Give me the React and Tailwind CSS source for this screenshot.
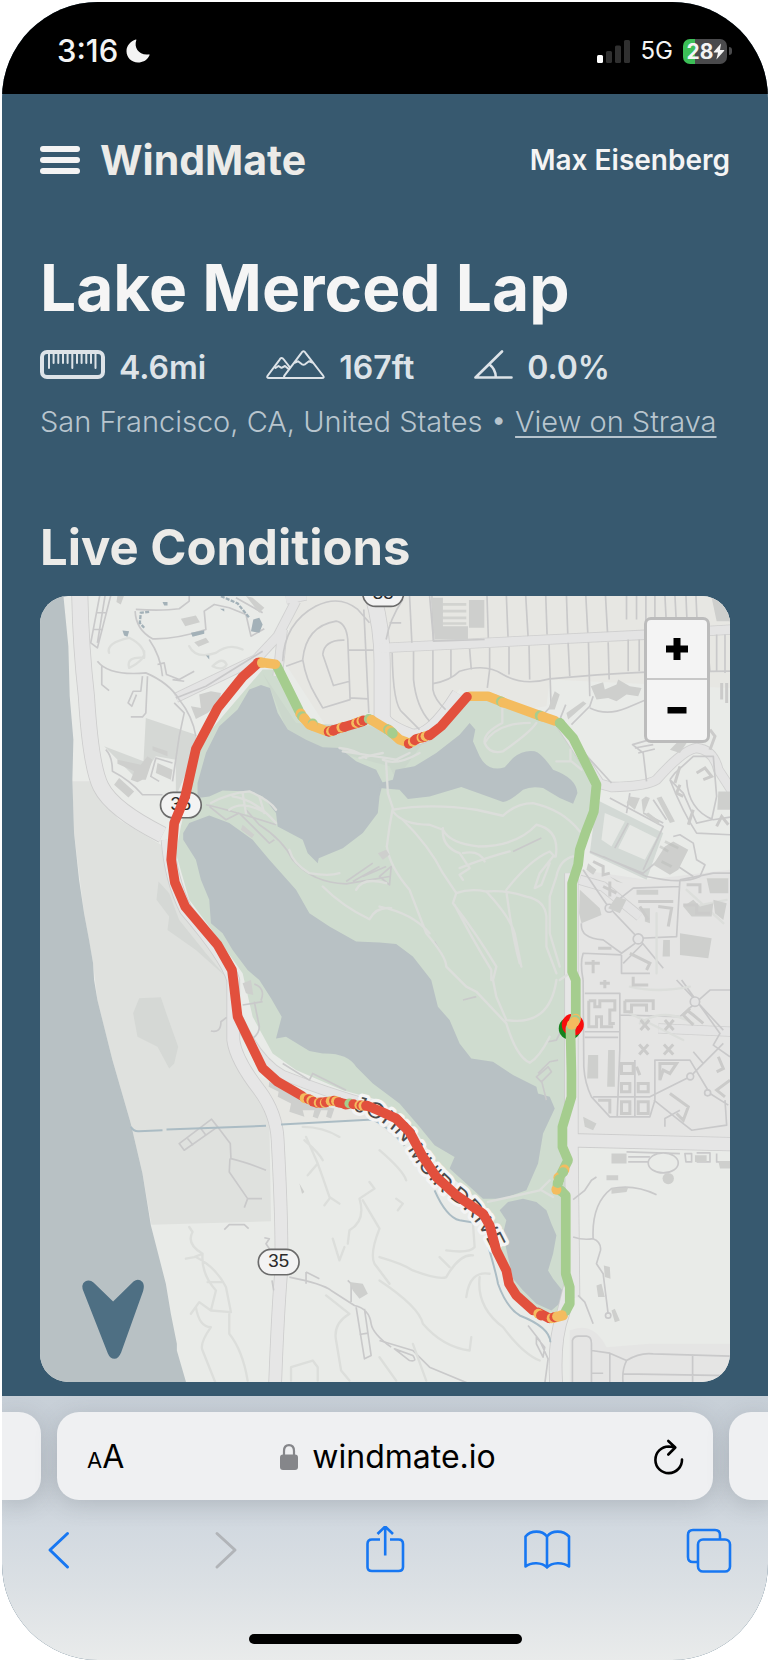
import React from 'react';

const RED = '#e2503d';
const ORANGE = '#f4bc5f';
const GREEN = '#a5cd8e';

/* Longer stretches of the course, coloured by wind exposure. */
const segments = [
  [GREEN, 'M1625 1340 L1638 1310 V1200 L1627 1175 V910 L1645 855 L1650 810 L1667 760 L1692 695 L1700 615 L1630 475 L1590 430'],
  [ORANGE, 'M1576 424 L1530 408 L1420 368 L1375 350 H1322'],
  [RED, 'M1312 352 L1235 440 L1200 467'],
  [RED, 'M1185 472 L1160 478'],
  [ORANGE, 'M1130 487 L1110 480 L1090 462'],
  [GREEN, 'M1090 462 L1072 448'],
  [ORANGE, 'M1070 448 L1050 436 L1024 420'],
  [RED, 'M1000 425 L945 442 L898 455'],
  [ORANGE, 'M890 454 L840 435 L812 402'],
  [GREEN, 'M808 392 L742 258'],
  [ORANGE, 'M738 254 L692 248'],
  [RED, 'M686 251 L640 292 L565 385 L500 508 L468 650 L435 730 L426 840 L437 908 L468 980 L565 1095 L608 1170 L612 1200 L625 1310 L700 1465 L745 1505 L818 1547'],
  [RED, 'M862 1568 L890 1566'],
  [RED, 'M925 1566 L955 1573'],
  [RED, 'M1012 1576 L1050 1592 L1100 1615 L1140 1655 L1180 1730 L1220 1790 L1280 1845 L1360 1900 L1380 1935 L1400 2010 L1430 2070 L1438 2110 L1460 2145 L1510 2190'],
  [RED, 'M1525 2196 L1558 2213'],
  [ORANGE, 'M1574 2212 L1600 2205'],
  [GREEN, 'M1608 2192 L1620 2170 V2120 L1608 2080 V1845 L1595 1832'],
  [GREEN, 'M1583 1815 L1590 1790 L1615 1740 L1598 1700 V1640 L1625 1550 V1480 L1622 1345'],
];

/* Short samples where the exposure flips quickly: [x, y, colour]. */
const samples = [
  [694, 249, ORANGE], [686, 250, RED], [698, 250, ORANGE],
  [814, 402, ORANGE], [818, 410, GREEN], [824, 416, ORANGE], [850, 432, GREEN], [850, 438, ORANGE],
  [898, 456, RED], [905, 455, ORANGE], [912, 453, RED], [936, 444, ORANGE], [944, 442, RED],
  [980, 430, ORANGE], [988, 428, RED], [996, 424, ORANGE], [1002, 423, RED], [1018, 418, GREEN], [1026, 421, ORANGE],
  [1076, 450, GREEN], [1081, 453, ORANGE], [1088, 459, GREEN],
  [1138, 492, RED], [1150, 486, ORANGE], [1156, 482, RED], [1176, 474, ORANGE], [1181, 472, RED], [1188, 470, ORANGE], [1198, 467, RED],
  [1414, 366, GREEN], [1420, 369, ORANGE], [1530, 408, GREEN], [1538, 411, ORANGE], [1590, 430, GREEN],
  [826, 1554, ORANGE], [838, 1557, RED], [846, 1561, ORANGE], [852, 1565, RED], [868, 1568, ORANGE], [874, 1568, RED],
  [886, 1568, ORANGE], [890, 1566, RED], [904, 1563, ORANGE], [914, 1562, RED], [920, 1563, ORANGE], [928, 1566, RED], [948, 1573, RED],
  [960, 1570, GREEN], [972, 1572, RED], [990, 1575, ORANGE], [996, 1576, RED], [1002, 1577, ORANGE], [1010, 1577, RED],
  [1526, 2200, ORANGE], [1534, 2205, RED], [1560, 2213, RED], [1566, 2213, ORANGE], [1574, 2210, RED], [1582, 2208, ORANGE], [1596, 2204, ORANGE],
  [1594, 1833, GREEN], [1580, 1828, ORANGE], [1584, 1808, GREEN], [1586, 1792, ORANGE], [1588, 1798, GREEN], [1604, 1768, ORANGE], [1600, 1776, GREEN],
  [1638, 1316, ORANGE], [1637, 1320, GREEN], [1634, 1326, ORANGE], [1626, 1334, ORANGE],
];

function RouteShield({ x, y, label }) {
  return (
    <g>
      <rect x={x - 61} y={y - 38} width="122" height="76" rx="38" fill="#f3f3f3" stroke="#6b6b6b" strokeWidth="5" />
      <text x={x} y={y + 16} textAnchor="middle" fontSize="56" fill="#2b2b2b" className="font-['Liberation_Sans']">{label}</text>
    </g>
  );
}

function RouteMap() {
  return (
    <svg viewBox="33 48 2067 2358" preserveAspectRatio="xMidYMid slice" className="block h-full w-full" role="img" aria-label="Map of the Lake Merced Lap course">
      <rect x="33" y="48" width="2067" height="2358" fill="#e9ebe8" />
      {/* built-up ground */}
      <g fill="#e7e7e3">
        <path d="M800 48 H2100 V325 L1560 300 L1550 380 L1480 390 L1290 330 L1190 450 L1050 430 L890 440 L760 240Z" />
        <path d="M690 1490 L730 1630 L1030 1620 L1130 1700 L1100 1600 L900 1560Z" />
      </g>
      <path d="M1700 1085 L1650 1040 V870 L1850 900 L2100 870 V1690 H1650 V1100Z" fill="#e4e4e3" />
      <path d="M1650 860 L1700 900 H2100 V1690 L1645 1680Z" fill="#e5e5e4" />
      <path d="M1620 2250 Q1690 2220 1730 2300 L1860 2290 H2100 V2410 H1620Z" fill="#e5e5e4" />
      <path d="M1700 660 L1900 760 L1850 900 L1680 820Z" fill="#d3d9d5" />
      <path d="M130 605 H190 L215 660 L270 720 L395 795 L410 880 L600 1180 L595 1380 L640 1480 L720 1620 L725 1923 L367 1933 L340 1780 L305 1630 L250 1440 L205 1260 L192 1150 L165 1000 L135 760Z" fill="#dfe1de" />
      <g fill="#d5d8d5">
        <path d="M350 415 L500 465 L505 500 L440 650 L440 540 L380 530 L330 605 L225 500 L343 545Z" />
        <path d="M388 905 L420 940 L450 1020 L530 1120 L590 1190 L500 1110 L415 1050 L420 1010 L382 960Z" />
        <path d="M330 1255 L395 1252 L415 1310 L447 1400 L435 1450 L420 1465 L385 1400 L325 1370 L312 1300Z" />
      </g>
      <path d="M33 48 H103 L118 200 L122 350 L133 480 L130 600 L135 760 L150 900 L165 1000 L180 1080 L192 1150 L195 1200 L205 1260 L250 1440 L305 1630 L340 1780 L365 1935 L410 2110 L425 2200 L443 2290 V2310 L472 2410 H33Z" fill="#b8c1c4" />
      {/* park */}
      <path d="M700 270 H740 L800 400 L900 470 L1020 430 L1080 450 L1140 490 L1200 470 L1300 345 H1400 L1590 430 L1700 620 L1680 760 L1640 860 L1630 1200 L1640 1560 L1600 1700 L1620 1830 L1610 2150 L1590 2200 L1500 2190 L1430 2080 L1395 1960 L1370 1880 L1230 1760 L1150 1640 L1050 1560 L940 1530 L800 1470 L730 1420 L670 1310 L640 1180 L540 1040 L480 960 L440 820 L455 740 L490 590 L520 480Z" fill="#cfdccf" />
      <path d="M700 280 L800 430 L1020 440 L1180 490 L1100 600 L1080 560 L930 520 L780 470 L720 320Z" fill="#cbd7cc" />
      {/* lakes */}
      <g fill="#b8c1c4">
        <path d="M695 316 L722 325 L745 400 L775 450 L830 480 L880 503 L930 505 L980 545 L1040 570 L1060 610 L1050 650 L1045 700 L1000 760 L940 805 L868 835 L865 850 L835 820 L820 780 L745 740 L740 700 L700 650 L660 635 L580 632 L540 650 L505 655 V610 L530 520 L570 440 L625 390 L660 330Z" />
        <path d="M1098 570 L1155 560 L1220 520 L1290 465 L1320 430 L1337 450 L1330 485 L1350 530 Q1375 578 1425 563 L1450 535 Q1480 510 1515 515 Q1535 520 1570 570 Q1640 595 1643 640 L1630 672 L1590 655 L1540 625 Q1505 618 1480 630 Q1440 665 1420 667 L1360 645 L1295 622 L1200 650 L1135 658 L1110 630 L1050 625 L1052 610 L1090 600Z" />
        <path d="M462 760 L480 730 L540 707 L600 730 L670 780 L720 840 L800 930 L840 1000 L900 1040 L980 1085 L1050 1088 L1100 1092 L1150 1130 L1205 1200 L1225 1280 L1260 1320 L1290 1390 L1325 1435 L1390 1445 L1450 1485 L1520 1520 L1525 1540 L1560 1550 L1575 1585 L1540 1660 L1525 1750 L1490 1830 L1420 1855 H1360 L1260 1765 L1275 1730 L1215 1695 L1170 1640 L1110 1570 L1030 1510 L980 1460 Q955 1418 880 1420 L840 1413 L770 1370 L740 1375 L757 1310 L725 1255 L690 1200 L655 1170 L610 1110 L580 1060 L545 1030 L540 960 L515 900 L500 840 L462 780Z" />
        <path d="M1410 1890 L1435 1865 L1480 1855 L1520 1865 L1550 1890 L1565 1930 L1580 1965 L1570 2020 L1555 2070 L1570 2095 L1598 2130 L1595 2165 L1565 2190 L1520 2170 L1480 2130 L1450 2095 L1435 2030 L1420 1960 L1430 1920Z" />
      </g>

      {/* arterial roads: casing first, then surface */}
      {[['#cdcdcd', 5], ['#e6e6e6', 0]].map(([tone, extra]) => (
        <g key={tone} fill="none" stroke={tone} strokeLinejoin="round">
          <path strokeWidth={46 + extra} d="M152 40 Q155 200 172 350 Q185 560 215 620 Q250 690 400 765 M1028 40 Q1058 140 1058 250 V410 Q1060 440 1140 470 Q1200 490 1290 345" />
          <path strokeWidth={36 + extra} d="M415 780 Q425 900 470 990 Q590 1130 612 1200 V1380 Q620 1440 690 1530 Q742 1600 745 1680 Q760 1960 755 2080 Q745 2200 737 2420 M1580 2420 Q1570 2280 1600 2200 L1630 2080" />
          <path strokeWidth={26 + extra} d="M625 1310 Q680 1440 760 1485 Q900 1540 1010 1570 M800 64 L745 170 L680 240 L440 355 M770 60 L830 48 M760 150 L745 290 M1050 206 L1860 165 L2110 150 M1590 430 L1710 612 L1745 622 Q1850 620 1880 600 Q1960 510 2000 505 Q2050 510 2065 570 L2110 640 M1830 1010 L1720 920 L1650 900 M1885 1345 L2110 1355" strokeOpacity="0.9" />
          <path strokeWidth={38 + extra} d="M1620 1680 L2110 1692 M1625 880 V1700 L1630 2150" />
        </g>
      ))}

      {/* local streets */}
      <g fill="none" stroke="#c9c9ca" strokeWidth="5" strokeLinejoin="round">
        <path d="M212 48 L185 190 L205 205 L245 48 M228 48 L205 190 M200 100 H232 M195 150 H222 M205 245 Q240 290 350 280 Q420 310 450 360 Q490 410 500 470 M218 260 V315 L240 333 M355 290 L350 400 L340 412 H305 M340 290 L335 335 L312 335 L297 370 L308 380 L322 345" />
        <path d="M440 355 L530 320 L700 215 M360 180 Q395 230 400 290 M385 255 L405 250 L412 285 L450 300 L495 275 M430 300 L465 305 M435 370 L465 400 L450 470 L430 605 M318 95 Q320 150 370 178 Q440 180 530 150 L525 95 L555 75 L600 85 L650 105 L665 170 L705 148 M320 90 Q400 95 450 88 L480 65 V48" />
        <path d="M230 510 Q250 530 250 575 Q300 600 340 645 H400 M430 550 L380 535 L365 590 L390 605 M620 55 L700 100" />
        <path d="M760 245 Q765 130 860 80 Q930 45 985 90 L1020 130 M820 240 Q830 140 920 125 Q950 130 955 180 L962 360 L880 385 L860 350 Q830 300 820 240 M880 225 Q885 180 945 182 M880 225 L912 318 L958 306 M770 260 L820 242 M958 212 H1032 M962 355 L1015 358 M1003 90 L1018 400" />
        <path d="M1140 48 L1147 190 M1207 48 L1212 185 M1372 48 L1376 175 M1430 48 L1435 172 M1488 48 L1495 170 M1548 48 L1552 165 M1610 48 L1614 163 M1668 48 L1674 160 M1727 48 L1733 158 M1790 48 V120 M1820 48 V120 M1848 48 V150 M1875 48 V150 M1905 48 L1910 145 M1935 48 L1940 145 M1968 48 L1972 145 M1998 48 L2002 140" />
        <path d="M1088 220 Q1090 380 1120 400 L1170 450 M1152 215 V300 Q1160 380 1200 425 M1210 212 V330 Q1215 360 1248 390 M1264 210 V292 M1320 208 L1325 270 M1380 205 V270 L1373 325 M1438 202 V285 M1498 198 L1500 300 M1558 195 L1564 380 L1540 405 M1615 190 L1620 290 M1676 188 L1680 350 M1735 188 L1738 300 M1795 180 V275 M1828 180 V275 M2060 165 V275 M2030 165 L2040 275 M2085 165 V280" />
        <path d="M1210 312 Q1260 305 1290 275 Q1370 250 1420 285 Q1480 320 1560 298 Q1700 285 1850 278 L2100 275 M1200 48 L1212 185 L1365 180 M1080 130 H1115 M1070 180 Q1080 120 1120 60" />
        <path d="M1590 440 L1745 610 M1625 435 L1680 380 L1690 350 M1590 420 L1608 375 M1680 385 Q1730 410 1790 385 L1850 360 M1850 605 L1840 520 L1808 495 L1860 480 M1815 505 L1870 495 M1825 520 L1875 508 M1920 600 L1935 580 L1990 530 L2050 530 L2060 650 L2045 720 L2000 730 L1960 640 L1920 600 M1920 600 Q1960 700 2000 760 L2100 765 M1970 600 Q1975 690 2050 720 L2100 712" />
        <path d="M1680 815 L1840 880 L1900 830 L1990 890 M1755 805 L1795 730 M1720 830 L1850 890 Q1960 915 2010 890 L2025 855 L2000 840 L1990 790 L1950 765 L1930 770 M1840 700 L1900 730 M1740 655 L1900 740 L1840 870 M1870 660 L1910 720 M1800 640 L1790 700" />
        <path d="M1660 870 Q1700 930 1735 980 L1830 1080 L1900 1165 M1740 980 L1810 925 L1950 920 M1830 1080 L1775 1120 L1720 1080 Q1650 1075 1655 1030 M1830 1075 L1940 1070 L1950 900 M1775 1125 L1660 1120 Q1650 1150 1660 1200 M1775 1125 V1180 L1860 1180 M1840 1090 L1780 1150 M1950 900 L2050 880 H2100" />
        <path d="M1660 1200 L1662 1460 Q1665 1510 1685 1550 L1740 1610 H1860 L1875 1560 V1440 L1980 1440 L2040 1540 L2095 1575 M1665 1240 H1770 V1410 L1762 1610 M1770 1305 L1950 1310 L2040 1230 H2100 M1665 1355 H1770 M1665 1372 H1765 M1690 1550 H1860 L1980 1490 L2080 1390 M1872 1560 L1960 1630 L1985 1650 L2090 1635 L2085 1560 M1815 1440 V1610 M1940 1200 L2080 1350 M1955 1200 L2070 1360 L2050 1395 L2100 1430 M1905 1640 V1615 L1950 1590 M1990 1415 L2020 1450" />
        <path d="M1630 1858 L1665 1830 L1685 1800 L1700 1790 M1630 1970 Q1660 1980 1690 1975 Q1685 1870 1745 1825 Q1810 1810 1880 1843 M1690 1975 Q1715 1985 1712 2010 L1700 2050 L1720 2080 L1735 2200 M1645 2145 L1665 2165 L1690 2230 M1790 1715 L1950 1720 M1795 1730 H1860 M1795 1745 H1860 M1965 1720 H1985 V1745 H1968Z M2000 1718 H2040 V1745 H2000 M2060 1720 V1745 H2100" />
        <path d="M1628 2410 V2280 Q1632 2265 1650 2267 H1670 Q1685 2268 1685 2290 V2410 M1685 2310 L1740 2318 L1790 2340 Q1830 2315 1870 2320 L2100 2327 M1790 2340 Q1775 2370 1780 2410 M1740 2320 V2410 M1780 2380 L2100 2385 M1988 2325 V2405 M1685 2378 H1720 M1495 2235 L1530 2280 L1555 2335 L1545 2410 M1520 2270 L1545 2300 L1540 2330 L1520 2290Z M1050 2280 L1150 2310 L1200 2360 L1320 2410 M1095 2305 L1150 2325 Q1165 2345 1140 2340Z" />
        <path d="M450 1690 L547 1617 L565 1640 L465 1710Z M515 1645 L530 1665 M475 1675 L492 1695 M565 1640 L603 1690 L605 1735 Q650 1745 710 1770 M602 1735 L600 1775 L655 1855 H698 M655 1855 L645 1882 M545 1353 Q575 1360 575 1325 L592 1312 M585 1948 L600 1933 H645 L658 1945 M705 1972 L720 1975 L710 1990 L722 2008 M728 2100 L733 2130" />
        <path d="M780 2090 Q880 2110 905 2130 L975 2175 Q1020 2185 1025 2230 Q1030 2260 1085 2300 M830 2075 L870 2095 M830 2075 V2110 M980 2180 L1005 2335 L1025 2325 L1005 2185 M990 2262 L1015 2258 M965 2165 V2110 L955 2100 M760 1450 L840 1500 L850 1480 L950 1530 M640 1275 L700 1265 M675 1265 L690 1340 Q690 1360 670 1375 M675 1212 Q710 1225 695 1262" />
        <path d="M1535 1500 L1550 1560 M1525 1480 L1560 1445 L1585 1440 M1520 1490 L1555 1460 L1565 1475 L1535 1505Z M1555 1385 L1580 1380 L1590 1360 M530 675 Q600 690 740 735 M540 680 L590 720 L630 700 M630 700 L720 790 L735 780 M650 690 L690 735 Q760 780 790 840 Q850 910 950 912 L1080 890 M950 905 L1030 850 M970 905 L1050 860 M1000 890 L1070 860 M1050 890 L1085 860 L1080 915Z M1300 1260 L1340 1250 M1215 1085 L1235 1120 M1450 815 L1535 775" />
      </g>
      <circle cx="1738" cy="985" r="12" fill="#e4e4e4" stroke="#c9c9ca" strokeWidth="5" />
      <circle cx="1825" cy="1077" r="15" fill="#e4e4e4" stroke="#c9c9ca" strokeWidth="5" />
      <circle cx="1995" cy="1265" r="14" fill="#e4e4e4" stroke="#c9c9ca" strokeWidth="5" />
      <circle cx="1981" cy="1489" r="10" fill="#e4e4e4" stroke="#c9c9ca" strokeWidth="5" />
      <circle cx="2033" cy="1538" r="9" fill="#e4e4e4" stroke="#c9c9ca" strokeWidth="5" />
      <circle cx="1735" cy="2205" r="8" fill="none" stroke="#c9c9ca" strokeWidth="5" />
      <ellipse cx="1900" cy="1748" rx="45" ry="30" fill="#e9ebe8" stroke="#c9c9ca" strokeWidth="5" />

      {/* footpaths */}
      <g fill="none" stroke="#dcdedb" strokeWidth="7" strokeLinejoin="round" strokeLinecap="round">
        <path d="M1070 550 L1075 640 L1090 685 L1080 740 L1072 800 M1090 690 Q1200 670 1340 690 L1420 708 Q1460 670 1510 670 Q1600 690 1650 755 M1090 695 Q1120 735 1200 735 L1240 750 Q1260 790 1345 800 Q1460 800 1520 735 Q1590 750 1578 830 M1240 745 Q1235 800 1290 820 L1320 865 L1290 885 L1300 900 M1290 865 Q1380 830 1440 815 M1300 820 Q1350 810 1365 845" />
        <path d="M1120 720 Q1200 800 1240 880 L1280 940 L1270 970 Q1340 1060 1400 1160 L1390 1200 M1280 940 Q1320 925 1370 935 Q1430 930 1490 950 Q1545 960 1550 1010 V1100 L1580 1180 M1370 935 Q1440 1010 1455 1060 L1475 1160 M1430 930 Q1500 840 1560 815 L1575 830 M1570 830 L1530 880 L1515 925 L1535 915 L1560 850 M1630 830 Q1590 840 1580 890 L1560 950 V1060 L1590 1160 M1430 935 Q1450 1080 1470 1150 M1275 975 Q1330 1080 1385 1170 V1200" />
        <path d="M1072 800 Q1080 860 1140 930 L1190 1060 Q1250 1130 1250 1160 L1310 1220 L1340 1235 L1430 1330 Q1460 1430 1500 1448 Q1530 1430 1560 1370 M1390 1200 L1400 1250 L1430 1320 Q1560 1340 1580 1200 M1050 980 Q1150 1000 1200 1060 M1590 1200 L1620 1180 M780 810 Q790 850 840 880 Q900 890 930 880 M880 920 Q940 980 1020 1018 Q1040 980 1085 985 M980 930 Q1000 890 1070 910" />
        <path d="M1418 370 V430 Q1360 460 1365 490 Q1380 525 1420 515 Q1500 460 1520 430 M1365 490 Q1400 430 1500 430 M1580 545 H1625 L1655 570 M1622 545 V510 M930 505 Q980 510 1010 535 M940 515 Q1040 530 1100 540 L1140 520 M1060 540 Q1100 560 1170 520 M990 535 L1060 520 M545 670 Q600 640 660 635 Q720 660 740 690 M610 650 Q680 660 740 730 M600 690 Q640 660 710 700 M640 640 L650 700 M690 650 L705 700 M1375 1865 L1530 1830 L1560 1800 M1535 1830 L1570 1850" />
        <path d="M480 1940 L490 1955 Q470 1990 520 2020 L495 2030 L470 2035 M500 2030 Q560 2060 590 2120 L605 2195 M520 2020 Q515 2080 560 2130 L545 2190 L605 2195 M545 2190 L510 2165 L485 2200 M500 2180 Q510 2240 545 2240 Q510 2290 520 2310 L560 2410 M600 2200 L600 2260 Q640 2310 655 2400 M535 2105 H578" />
        <path d="M820 1640 Q880 1640 930 1670 M825 1680 Q870 1720 880 1740 M830 1670 L865 1750 L835 1785 M865 1750 Q880 1790 900 1850 L930 1870 M900 1855 L885 1875 M1020 1805 L1035 1825 L990 1855 Q1010 1920 960 1950 L955 1990 M1000 1860 L1050 1945 Q1020 2020 1035 2050 L1080 2110 M910 1975 L930 2040 L945 2000 M890 2145 L960 2200 Q910 2230 920 2280 L935 2370 L960 2400 M785 2400 V2360 L850 2340 L865 2360 V2400" />
        <path d="M1050 2030 Q1120 2050 1150 2070 Q1230 2100 1250 2090 Q1290 2020 1330 2025 M1250 2010 Q1320 2020 1335 2000 L1330 1930 M1230 2030 L1260 2060 M1050 2100 Q1170 2180 1180 2230 Q1240 2300 1320 2310 L1325 2270 M1380 2080 Q1320 2070 1310 2150 M1350 2090 Q1340 2180 1420 2240 Q1480 2320 1530 2340 M1050 1710 Q1120 1770 1130 1800 M1100 1855 L1120 1870 L1105 1890 M1050 2330 L1100 2400 M1150 2290 L1190 2400" />
        <path d="M240 220 Q230 190 300 175 Q350 200 345 235 Q290 230 300 265 Q350 240 345 215 M480 200 Q500 240 560 220 Q600 190 640 210 M550 260 Q580 230 592 255 Q580 275 550 260" />
        <path d="M1800 1220 Q1880 1240 1980 1220 M1800 1300 L1960 1380 M1830 1330 Q1900 1280 1990 1330 M1990 980 L2090 960 M1970 930 L2080 1030 M1880 1000 V1180" />
      </g>

      {/* buildings */}
      <g fill="#cecfcd">
        <path d="M455 118 L500 108 L512 128 L468 140Z M495 188 L530 175 L540 188 L508 202Z M650 50 L670 55 L705 85 L690 100Z M265 48 H285 L275 75 L262 68Z" />
        <path d="M485 380 L515 385 L510 345 L545 335 L575 340 L570 370 L535 400 L500 418Z M370 500 L415 515 V530 L370 512Z M265 540 L335 555 L355 530 L370 540 L350 600 H340 L325 608 L305 600 L315 575 L265 552Z M385 550 L430 570 L425 600 L380 580Z M270 595 L315 635 L298 653 L255 615Z" />
        <path d="M1205 55 H1240 V140 H1315 V180 H1215Z M1318 62 H1364 V145 H1318Z" />
        <path d="M2045 55 H2100 V125 H2060Z M1565 360 L1575 335 L1590 345 L1575 390 L1555 390Z M1610 400 L1660 365 L1670 372 L1615 420Z M1683 320 L1720 308 L1725 330 L1760 315 L1765 300 L1800 320 L1835 325 L1825 350 L1790 345 L1760 365 L1735 355 L1700 360Z" />
        <path d="M1790 670 L1800 650 L1830 655 L1815 690Z M1835 660 L1848 650 L1860 655 L1840 705Z M1880 655 L1895 650 L1935 725 L1920 730Z M1845 705 L1855 698 L1890 725 L1885 735Z" />
        <path d="M1905 800 L1930 785 L1975 810 L1945 870 L1920 885 L1870 855Z M1920 510 L1945 485 L1970 490 L1950 520Z M2065 635 H2100 V690 H2062Z" />
        <path d="M1650 930 L1710 985 L1715 1005 L1655 1030 L1648 1000Z M2030 895 H2095 V940 H2040Z M1960 980 L1990 960 L2010 980 L2050 970 L2045 1010 L1985 1010Z M1950 1060 L2045 1075 L2035 1135 L1950 1125Z M1900 1080 H1920 V1130 H1898Z M1820 930 H1885 V945 H1820Z M1675 850 L1700 870 L1690 885 L1670 870Z M1740 890 L1780 910 L1760 905Z M1735 985 L1760 950 L1790 960 L1770 1000Z M1825 985 L1860 985 V1030 L1845 1025 V1000Z M2050 960 L2090 970 L2080 1020 L2055 1000Z" />
        <path d="M1675 1425 H1705 V1495 H1672Z M1735 1410 H1755 V1520 H1732Z M1660 1610 L1700 1630 L1690 1650 L1665 1640Z M1745 1720 H1790 V1750 H1745Z M1730 1785 H1765 V1800 H1730Z M1745 1825 L1795 1822 L1790 1835 L1745 1840Z M1722 2055 L1740 2060 L1742 2095 L1725 2090Z M1700 2115 L1715 2110 L1725 2150 L1705 2150Z M1745 2190 L1755 2185 L1770 2220 L1755 2225Z M1995 1725 H2030 V1745 H1995Z M2065 1742 H2100 V1765 H2070Z" />
        <circle cx="1915" cy="1795" r="17" />
        <path d="M640 1210 L665 1200 L672 1245 L650 1240Z M720 1505 L790 1545 L840 1570 L915 1585 L905 1615 L890 1610 L895 1590 L875 1590 L865 1615 L850 1610 L855 1590 L820 1590 L825 1610 L780 1595 L785 1570 L745 1550 L748 1535 L718 1520Z M960 2105 L1000 2110 L1015 2140 L990 2155 L970 2130Z M640 735 L675 765 L668 775 L635 750Z M1045 820 L1070 810 L1080 825 L1060 840Z M810 1810 L825 1835 L818 1840Z" />
      </g>
      {/* small campus blocks */}
      <g fill="none" stroke="#cbcbca" strokeWidth="9">
        <path d="M1677 1262 H1695 V1280 H1710 V1262 H1755 V1290 H1740 V1330 H1755 M1677 1262 V1340 H1700 V1310 H1715 V1340 H1750 M1785 1262 H1870 V1290 M1785 1262 V1295 H1805 V1275 H1850 V1295 M1725 1200 V1225 M1710 1210 H1740 M1810 1190 V1215 H1855" />
        <path d="M1775 1450 H1810 V1480 H1775Z M1820 1460 L1830 1485 M1890 1450 H1940 L1920 1480 L1900 1470 L1890 1500Z M1775 1510 H1800 V1535 H1775Z M1825 1510 H1855 V1535 H1825Z M1705 1560 H1740 V1600 M1775 1565 H1800 V1600 H1775Z M1825 1565 H1855 V1600 H1825Z M1920 1540 L1975 1580 L1960 1620 L1940 1600 M2065 1430 L2080 1465 L2060 1475 M2100 1500 L2060 1530 L2085 1550" />
        <path d="M1690 845 L1720 860 V885 L1740 880 M1720 920 L1760 940 M1740 905 V950 M1825 965 H1930 M1830 980 L1855 1020 M1885 980 L1925 985 L1915 1040 M1970 915 H2010 V940 M1960 975 H2000 V1000 H2040 M1690 1140 V1180 M1665 1150 H1710 M1705 1105 H1745 M1800 1120 L1860 1150 L1850 1170 M2000 580 L2025 565 L2045 590 L2020 600 M1960 650 L1940 640 L1950 615 M1975 735 L1990 690 M2060 740 L2075 710 L2095 735 M1935 610 L1950 560 M2040 450 L2055 470 L2040 510 M2075 310 V360 M2090 310 V370" />
        <path d="M1832 1320 L1858 1350 M1858 1320 L1832 1350 M1905 1320 L1931 1350 M1931 1320 L1905 1350 M1828 1393 L1855 1423 M1855 1393 L1828 1423 M1902 1393 L1930 1423 M1930 1393 L1902 1423" />
        <path d="M1970 1290 L1990 1305 L2020 1330 M1980 1285 L1960 1305 L1990 1335" />
      </g>
      <path d="M1725 700 L1785 725 L1745 800 L1715 780Z M1800 735 L1880 775 L1845 840 L1765 805Z" fill="#e6e8e5" />
      <g stroke="#b9bab8" strokeWidth="8">
        <path d="M1890 800 L1915 815 M1905 785 L1945 805 M1895 845 L1925 860 M1240 75 H1310 M1240 95 H1310 M1240 115 H1310 M1240 132 H1310" strokeOpacity="0.45" />
      </g>

      {/* streams and ponds */}
      <g fill="none" stroke="#abbcc4" strokeWidth="6">
        <path d="M305 1640 Q315 1655 330 1653 L400 1650 M412 1648 L710 1637 M755 1633 L1030 1618 Q1080 1640 1125 1697 M1215 1830 Q1250 1910 1290 1920 L1335 1927 M1372 1985 Q1400 2080 1405 2110 Q1430 2180 1470 2205 Q1560 2240 1562 2285" />
      </g>
      <g fill="#a3b1b8">
        <path d="M672 120 L690 115 L700 135 L690 160 L665 155Z M485 160 L525 152 V163 L490 172Z M400 68 H415 V78 H405Z M280 153 L300 155 L295 172 L285 168Z M530 228 H540 V240Z M572 88 H585 V96Z" />
      </g>
      <path d="M575 50 L625 72 L660 115 M360 97 L335 100 L332 130 L345 145" fill="none" stroke="#a3b1b8" strokeWidth="7" strokeDasharray="12 4" />

      {/* labels */}
      <path id="muir-drive" d="M972 1592 Q1060 1610 1125 1690 Q1175 1785 1255 1850 Q1350 1910 1400 2040" fill="none" />
      <text fontSize="68" fill="#4a4a4a" stroke="#f4f4f4" strokeWidth="20" strokeLinejoin="round" paintOrder="stroke" className="font-['Liberation_Sans']">
        <textPath href="#muir-drive">JOHN MUIR DRIVE</textPath>
      </text>
      <RouteShield x={1061} y={43} label="35" />
      <RouteShield x={455} y={676} label="35" />
      <RouteShield x={748} y={2045} label="35" />

      {/* start and finish, then the course */}
      <circle cx="1620" cy="1345" r="33" fill="#16821d" />
      <circle cx="1629" cy="1334" r="33" fill="#f90d0d" />
      <g fill="none" strokeWidth="29" strokeLinecap="round" strokeLinejoin="round">
        {segments.map(([tone, d]) => <path key={d} d={d} stroke={tone} />)}
      </g>
      {samples.map(([x, y, tone], i) => <circle key={i} cx={x} cy={y} r="15" fill={tone} />)}

      {/* wind direction */}
      <path d="M252 2163 L313 2103 Q328 2092 340 2105 Q347 2115 342 2132 L276 2316 Q268 2335 256 2335 Q243 2335 236 2318 L164 2135 Q154 2112 168 2103 Q182 2096 194 2107Z" fill="#4e6f83" />
    </svg>
  );
}

function StatusBar() {
  return (
    <div className="flex h-[92px] items-center justify-between bg-black pt-1.5 pr-9 pl-[55px] text-[#f4f4f4]">
      <div className="flex items-center gap-2">
        <span className="text-[31px] leading-9 font-medium">3:16</span>
        <svg viewBox="0 0 24 24" className="size-6" fill="currentColor" aria-label="Do not disturb">
          <path d="M9.8 .6 Q10.5 0 10.3 1.2 C7.6 8.6 13 16.6 22.6 15.4 Q24 15.2 23.4 16.4 C20.9 21.4 16.6 23.4 12 23.4 C5.4 23.4 .5 18.4 .5 12.2 C.5 6.800 4.500 2.200 9.800 .6Z" />
        </svg>
      </div>
      <div className="flex items-center">
        <svg viewBox="0 0 34 23" className="h-[23px] w-[34px]" aria-label="Signal">
          <rect x="0" y="15" width="6" height="8" rx="1.500" fill="#fff" />
          <rect x="9" y="11" width="6" height="12" rx="1.500" fill="#303030" />
          <rect x="18" y="5.500" width="6" height="17.500" rx="1.500" fill="#303030" />
          <rect x="27" y="0" width="6" height="23" rx="1.500" fill="#303030" />
        </svg>
        <span className="ml-2.5 text-2xl">5G</span>
        <div className="ml-2.5 flex h-[25px] w-11 items-center justify-center rounded-[7px] bg-[linear-gradient(to_right,#3cbf57_28%,#4a4a4c_28%)] pl-0.5">
          <span className="text-[21px] leading-none font-bold">28</span>
          <svg viewBox="0 0 12 17" className="h-[17px] w-3" fill="currentColor" aria-hidden="true">
            <path d="M8 .4 L.8 8.800 Q.4 9.600 1.200 9.600 H5 L3.400 16.600 L11.200 7.800 Q11.600 7 10.800 7 H7Z" />
          </svg>
        </div>
        <div className="ml-0.5 h-2 w-[3px] rounded-r-full bg-[#4a4a4c]" />
      </div>
    </div>
  );
}

function Stat({ icon, children }) {
  return (
    <li className="flex items-baseline gap-3.5">
      {icon}
      <span>{children}</span>
    </li>
  );
}

const ruler = (
  <svg viewBox="0 0 65 29" className="h-[29px] w-[65px]" fill="none" stroke="currentColor" aria-label="Distance">
    <rect x="2" y="2" width="61" height="25" rx="5" strokeWidth="4" />
    <path d="M9 3 V18 M32.300 3 V18 M55.500 3 V18 M13.600 3 V13 M18.300 3 V13 M23 3 V13 M27.600 3 V13 M37 3 V13 M41.600 3 V13 M46.300 3 V13 M51 3 V13" strokeWidth="2" strokeLinecap="round" />
  </svg>
);
const mountains = (
  <svg viewBox="0 0 59 29" className="h-[29px] w-[59px]" fill="none" stroke="currentColor" strokeWidth="2" strokeLinejoin="round" strokeLinecap="round" aria-label="Elevation">
    <path d="M35.500 2.800 Q37.500 -.2 39.500 2.800 L57 25.500 Q58.800 28 56 28 H20 Q17 28 18.600 25.300Z M18 28 H3 Q.2 28 1.800 25.500 L13.500 9.800 Q15.500 6.500 17.800 9.500 L24 17.500 M28.500 12.800 L32 11.300 L36 14.300 Q37.500 15 39 14.300 L43 11.300 L47 12.800 M9.500 18 L12.500 16 L15.500 17.800 L19 16 L22 18.500" />
  </svg>
);
const angle = (
  <svg viewBox="0 0 39 29" className="h-[29px] w-[39px]" fill="none" stroke="currentColor" strokeWidth="2.600" strokeLinejoin="round" strokeLinecap="round" aria-label="Average grade">
    <path d="M28 1.500 L1.500 27.500 H37.500 M15.500 14.500 Q21.500 19 21.800 27" />
  </svg>
);

function SafariBar() {
  return (
    <footer className="bg-[linear-gradient(to_bottom,#c8d0d8_0%,#c5ccd3_30%,#d2d9e0_50%,#dbe0e4_72%,#e9ebeb_100%)]">
      <div className="flex gap-4 pt-4">
        <div className="h-22 w-[39px] rounded-r-[22px] bg-[#eff0f2] shadow-[0_4px_22px_rgba(90,100,110,0.22)]" />
        <div className="flex h-22 flex-1 items-center justify-between rounded-[22px] bg-[#eff0f2] pt-0.5 pr-4 pl-[30px] text-black shadow-[0_4px_22px_rgba(90,100,110,0.22)]">
          <button type="button" aria-label="Page settings" className="flex w-12 items-baseline leading-none">
            <span className="text-[22px]">A</span>
            <span className="text-[32px]">A</span>
          </button>
          <div className="flex items-center gap-3.5">
            <svg viewBox="0 0 18 26" className="h-[26px] w-[18px]" aria-label="Secure">
              <rect x="0" y="10.500" width="18" height="15.500" rx="3" fill="#85868a" />
              <path d="M4 11 V7 Q4 1.200 9 1.200 Q14 1.200 14 7 V11" fill="none" stroke="#85868a" strokeWidth="2.200" />
            </svg>
            <span className="text-[32px] leading-10">windmate.io</span>
          </div>
          <button type="button" aria-label="Reload" className="flex w-14 justify-center">
            <svg viewBox="0 0 30 36" className="h-9 w-[30px]" fill="none" stroke="currentColor" strokeWidth="2.600" strokeLinecap="round" strokeLinejoin="round">
              <path d="M28 20.500 A13.300 13.300 0 1 1 14.700 7.500 L21 8.200 M14.300 2 L21.300 8.500 L14.300 15.500" />
            </svg>
          </button>
        </div>
        <div className="h-22 w-[39px] rounded-l-[22px] bg-[#eff0f2] shadow-[0_4px_22px_rgba(90,100,110,0.22)]" />
      </div>
      <nav aria-label="Browser" className="flex h-25 items-center justify-between px-[34px] text-[#1777f2] [&_button]:flex [&_button]:w-12 [&_button]:justify-center [&_svg]:size-12">
        <button type="button" aria-label="Back">
          <svg viewBox="0 0 48 48" fill="none" stroke="currentColor" strokeWidth="3" strokeLinecap="round" strokeLinejoin="round"><path d="M31.500 7.500 L14 24 L31.500 41" /></svg>
        </button>
        <button type="button" aria-label="Forward" disabled className="text-[#b1b4b8]">
          <svg viewBox="0 0 48 48" fill="none" stroke="currentColor" strokeWidth="3" strokeLinecap="round" strokeLinejoin="round"><path d="M18 7.500 L36 24 L18 41" /></svg>
        </button>
        <button type="button" aria-label="Share">
          <svg viewBox="0 0 48 48" fill="none" stroke="currentColor" strokeWidth="2.600" strokeLinejoin="round"><path d="M19 13.500 H11 Q6.500 13.500 6.500 18 V41 Q6.500 45 11 45 H37.500 Q42 45 42 41 V18 Q42 13.500 37.500 13.500 H29 M24.200 29.500 V1 M16.500 8 L24.200 .5 L32 8" /></svg>
        </button>
        <button type="button" aria-label="Bookmarks">
          <svg viewBox="0 0 48 48" fill="none" stroke="currentColor" strokeWidth="2.600" strokeLinejoin="round" strokeLinecap="round"><path d="M23 10.500 C18 4 7 4 1.500 10.500 V40.500 C7 36 18 36 23 41.500 C28 36 39 36 45 40.500 V10.500 C39 4 28 4 23 10.500 V41" /></svg>
        </button>
        <button type="button" aria-label="Tabs">
          <svg viewBox="0 0 48 48" fill="none" stroke="currentColor" strokeWidth="2.600" strokeLinejoin="round"><path d="M12 36 H7 Q2 36 2 31 V9 Q2 4 7 4 H29 Q34 4 34 9 V13.500" /><rect x="12" y="13.500" width="32" height="32" rx="5" /></svg>
        </button>
      </nav>
      <div className="flex h-[60px] items-end justify-center pb-4">
        <div className="h-2.5 w-[273px] rounded-full bg-black" />
      </div>
    </footer>
  );
}

export default function App() {
  return (
    <div className="bg-white p-0.5 font-[Inter,'Noto_Sans',sans-serif]">
      <div className="overflow-hidden rounded-[96px] bg-[#37596f]">
        <StatusBar />
        <header className="flex h-[132px] items-center justify-between px-[38px]">
          <div className="flex items-center gap-5">
            <button type="button" aria-label="Open menu" className="flex w-10 flex-col gap-[5px]">
              <span className="h-1.5 rounded-full bg-[#f4f4f4]" />
              <span className="h-1.5 rounded-full bg-[#f4f4f4]" />
              <span className="h-1.5 rounded-full bg-[#f4f4f4]" />
            </button>
            <a href="#home" className="text-[41px] leading-12 font-bold text-[#ecebe8]">WindMate</a>
          </div>
          <a href="#profile" className="text-[28px] leading-9 font-semibold text-[#f4f4f4]">Max Eisenberg</a>
        </header>
        <main className="px-[38px] pb-3.5">
          <h1 className="pt-[26px] text-[64px] leading-[72px] font-bold text-[#f5f5f5]">Lake Merced Lap</h1>
          <ul className="mt-6 flex gap-[60px] text-[32px] leading-10 font-semibold text-[#dde3e8]">
            <Stat icon={ruler}>4.6mi</Stat>
            <Stat icon={mountains}>167ft</Stat>
            <Stat icon={angle}>0.0%</Stat>
          </ul>
          <p className="mt-4 text-[29px] leading-9 font-light text-[#b8c5ce]">
            San Francisco, CA, United States • <a href="#strava" className="underline underline-offset-4">View on Strava</a>
          </p>
          <h2 className="mt-20 text-[49px] leading-14 font-bold text-[#ecebe8]">Live Conditions</h2>
          <section aria-label="Live conditions map" className="relative mt-5 aspect-[690/786] overflow-hidden rounded-[28px]">
            <RouteMap />
            <div className="absolute top-[21px] right-5 flex flex-col divide-y-2 divide-[#c8c8c8] rounded-[7px] border-[3px] border-[#bcbcbc] bg-[#f4f4f4] text-black">
              <button type="button" aria-label="Zoom in" className="flex size-[60px] items-center justify-center">
                <svg viewBox="0 0 22 22" className="size-[22px]" fill="currentColor"><path d="M7.500 0 H14.500 V7.500 H22 V14.500 H14.500 V22 H7.500 V14.500 H0 V7.500 H7.500Z" /></svg>
              </button>
              <button type="button" aria-label="Zoom out" className="flex size-[60px] items-center justify-center">
                <svg viewBox="0 0 22 22" className="size-[22px]" fill="currentColor"><path d="M1.500 8 H20.500 V14.500 H1.500Z" /></svg>
              </button>
            </div>
          </section>
        </main>
        <SafariBar />
      </div>
    </div>
  );
}
